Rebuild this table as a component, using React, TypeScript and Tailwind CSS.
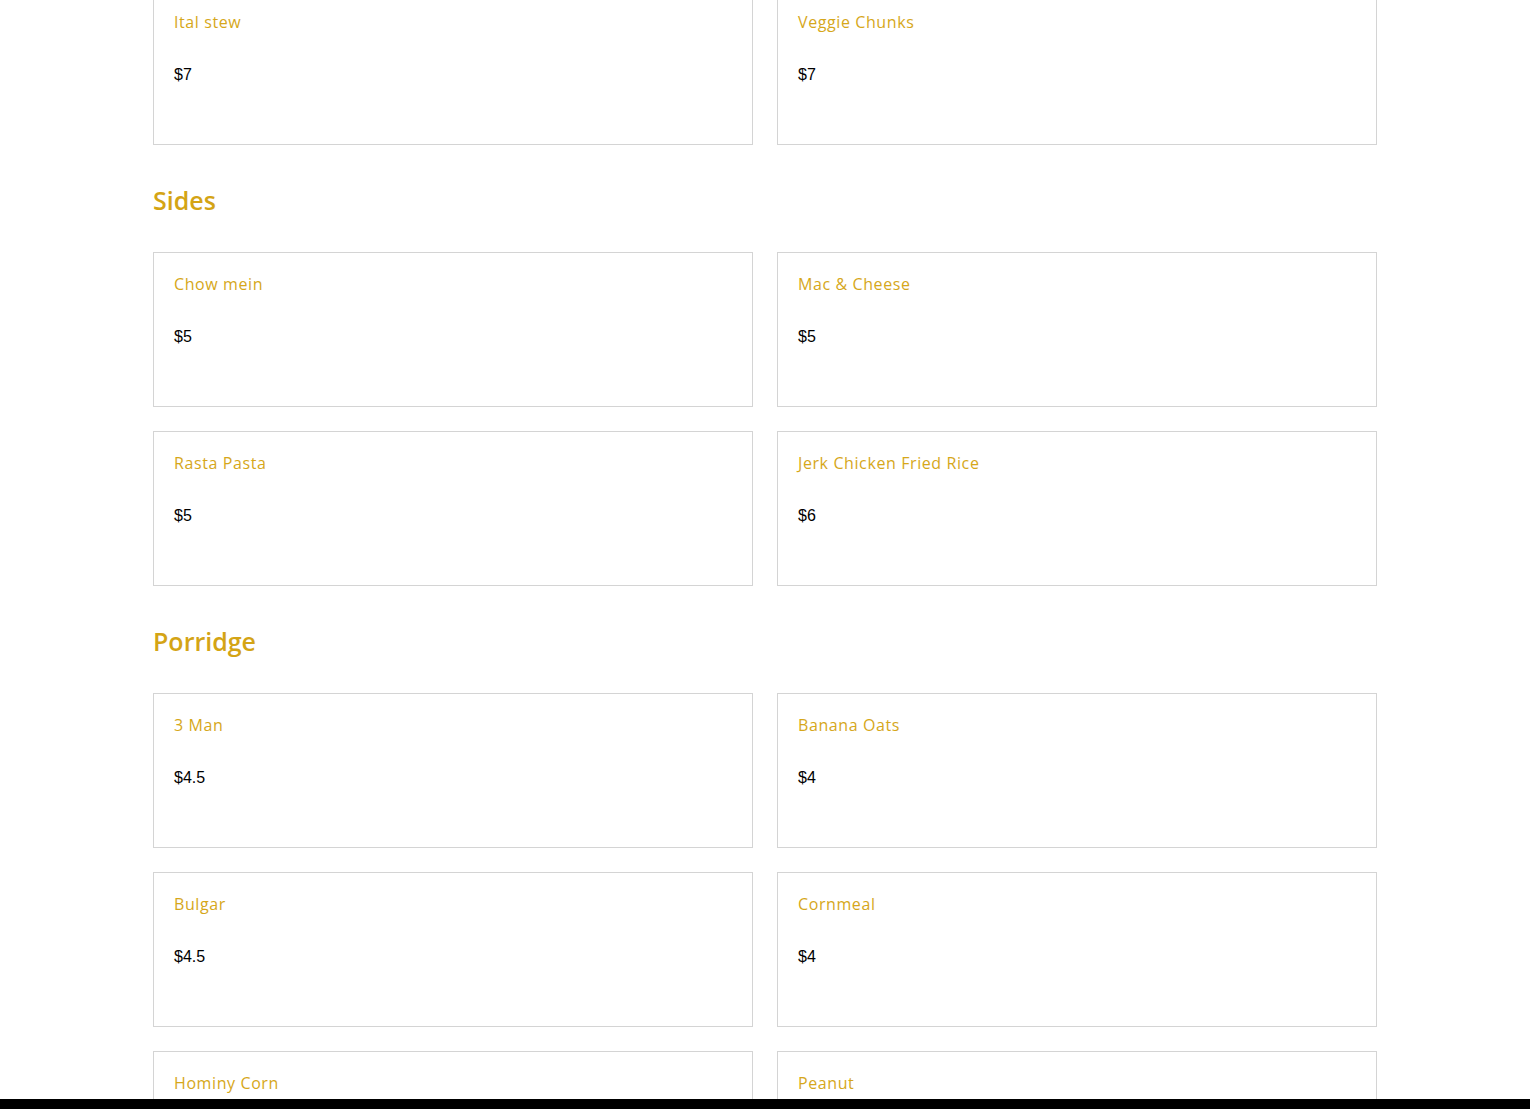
import React from "react";

type Item = { name: string; price: string };

const sections: { title?: string; items: Item[] }[] = [
  { items: [{ name: "Ital stew", price: "$7" }, { name: "Veggie Chunks", price: "$7" }] },
  {
    title: "Sides",
    items: [
      { name: "Chow mein", price: "$5" },
      { name: "Mac & Cheese", price: "$5" },
      { name: "Rasta Pasta", price: "$5" },
      { name: "Jerk Chicken Fried Rice", price: "$6" },
    ],
  },
  {
    title: "Porridge",
    items: [
      { name: "3 Man", price: "$4.5" },
      { name: "Banana Oats", price: "$4" },
      { name: "Bulgar", price: "$4.5" },
      { name: "Cornmeal", price: "$4" },
      { name: "Hominy Corn", price: "$4" },
      { name: "Peanut", price: "$4" },
    ],
  },
];

function Card({ item }: { item: Item }) {
  return (
    <div className="border border-[#d4d4d4] bg-white px-5 pt-[19px] pb-[57px]">
      <div
        className="text-[16px] leading-6 tracking-[0.6px] text-[#d6a71a]"
        style={{ fontFamily: '"Open Sans", "Noto Sans", sans-serif' }}
      >
        {item.name}
      </div>
      <div
        className="mt-[29px] text-[16px] leading-6 text-black"
        style={{ fontFamily: '"Liberation Sans", Arial, sans-serif' }}
      >
        {item.price}
      </div>
    </div>
  );
}

export default function App() {
  return (
    <div className="h-[1109px] overflow-hidden bg-white">
      <div className="mx-auto -mt-[10px] w-[1224px]">
        {sections.map((s, i) => (
          <div key={i}>
            {s.title && (
              <h2
                className="mt-9 mb-8 text-[25px] font-semibold leading-[39px] text-[#d4a415]"
                style={{ fontFamily: '"Open Sans", "Noto Sans", sans-serif' }}
              >
                {s.title}
              </h2>
            )}
            <div className="grid grid-cols-2 gap-6">
              {s.items.map((it) => (
                <Card key={it.name} item={it} />
              ))}
            </div>
          </div>
        ))}
      </div>
      <div className="fixed bottom-0 left-0 right-0 h-[10px] bg-black" />
    </div>
  );
}
